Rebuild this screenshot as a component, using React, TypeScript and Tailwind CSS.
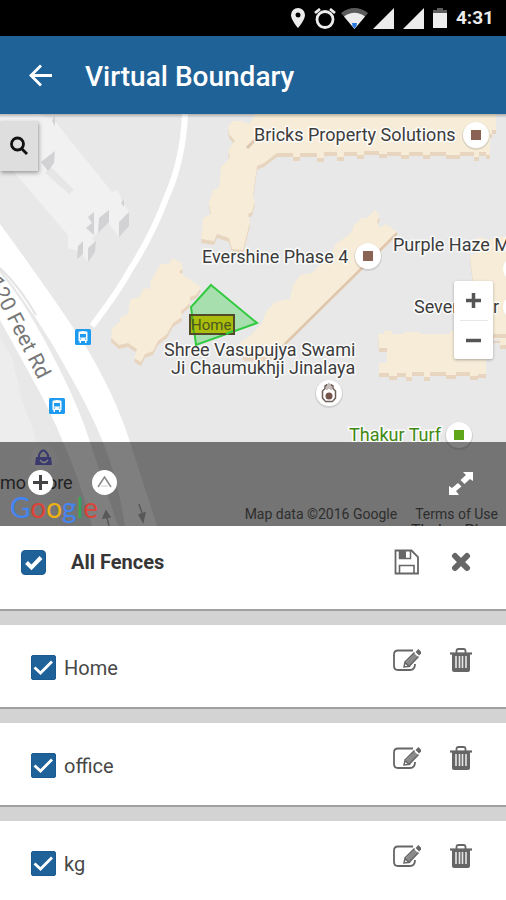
import { useState } from "react";
import type { ReactNode } from "react";

const fences = ["Home", "office", "kg"];

function StatusBar() {
  return (
    <div className="flex h-9 items-center justify-end gap-[9px] bg-black pr-3 text-[#ececec]">
      <svg width="14" height="20" viewBox="0 0 14 20" fill="currentColor" aria-hidden="true">
        <path fillRule="evenodd" d="M7 0a7 7 0 0 0-7 7c0 5 7 13 7 13s7-8 7-13a7 7 0 0 0-7-7Zm0 4.500a2.500 2.500 0 1 1 0 5 2.500 2.500 0 0 1 0-5Z" />
      </svg>
      <svg width="22" height="21" viewBox="0 0 22 21" fill="none" stroke="currentColor" strokeWidth="2.800" aria-hidden="true">
        <circle cx="11" cy="11.500" r="8" />
        <path d="M1 5l5-4M21 5l-5-4" />
      </svg>
      <svg className="-ml-1" width="27" height="21" viewBox="0 0 27 21" aria-hidden="true">
        <path d="M0 5Q13.500-5 27 5L13.500 21Z" fill="#5c5c5c" />
        <path d="M3 8.500Q13.500 1 24 8.500L13.500 21Z" fill="currentColor" />
        <path d="M11 15h5l-.5 3-2 2.500-2-2.500Z" fill="#2878e0" />
      </svg>
      <svg className="-ml-1" width="21" height="21" viewBox="0 0 21 21" fill="currentColor" aria-hidden="true">
        <path d="M21 0v21H0Z" />
      </svg>
      <svg width="21" height="21" viewBox="0 0 21 21" fill="currentColor" aria-hidden="true">
        <path d="M21 0v21H0Z" />
      </svg>
      <svg width="14" height="20" viewBox="0 0 14 20" aria-hidden="true">
        <path d="M0 2h4V0h6v2h4v4H0Z" fill="#5c5c5c" />
        <path d="M0 5h14v15H0Z" fill="currentColor" />
      </svg>
      <span className="text-[19px] leading-5 font-bold">4:31</span>
    </div>
  );
}

function BusStop({ x, y }: { x: number; y: number }) {
  return (
    <g transform={`translate(${x} ${y})`}>
      <rect width="16" height="16" rx="1.500" fill="#1e9bef" />
      <path d="M3.500 3.500q0-1.500 4.500-1.500t4.500 1.500V12h-1v2H10v-2H6v2H4.500v-2h-1Z" fill="#fff" />
      <path d="M5 5h6v3.500H5Z" fill="#1e9bef" />
      <path d="M4.700 10h1.500M9.800 10h1.500" stroke="#1e9bef" />
    </g>
  );
}

function Pin({ x, y, color }: { x: number; y: number; color: string }) {
  return (
    <g>
      <circle cx={x} cy={y + 1} r="14" fill="#000" opacity=".1" />
      <circle cx={x} cy={y} r="13" fill="#fff" />
      <rect x={x - 5} y={y - 5} width="10" height="10" fill={color} />
    </g>
  );
}

const buildings = [
  "M228 126L234 121H242L249 124L256 114H496V130H492V134H490V155H486V152H479V157H474V152H460V155H446V152H430V155H423V152H409V155H401V152H387V154H379V151H364V155H357V152H344V157H337V152H324V158H317V153H300V157H293V153H277L264 163L257 166L253 196L255 201L252 212L248 214L250 222L246 238L243 250L232 249L229 238L217 234L214 241L201 239L203 218L211 214L209 203L213 190L219 188L221 167L230 158L228 150L235 141L229 134Z",
  "M158 268L161 264L169 264L172 258L180 262L183 268L179 272L201 287L196 295L190 297V303L181 311L182 317L173 323L167 334L158 341L153 351L145 354L141 362L134 358L137 349L128 343L119 345L111 338L112 328L121 321L119 318L128 314L130 300L139 297L144 288L150 289L151 280Z",
  "M375 210L380 215L377 222L380 228L386 224L397 232L285 342L270 357H244L238 344L250 336L262 323L266 312L275 302L290 299L293 285L300 275L312 273L330 255L336 244L352 232L354 225L362 218H367Z",
  "M378 334H384V331H392V334H404V332H420V334H450V331H486V337H506V345H500V339H486V374H478V376H470V372H456V375H446V372H430V377H424V372H412V377H406V373H397V376H389V373H379V363H387V348H379Z",
  "M470 256L475 254L474 240L480 237L488 240L506 236V334H470L474 290Z",
];

const labelHalo = "fill-[#3c3c3c] stroke-white/80 stroke-3 [paint-order:stroke] [stroke-linejoin:round]";

function MapArt() {
  return (
    <svg className="block h-full w-full" viewBox="0 114 506 412" preserveAspectRatio="xMidYMid slice" role="img" aria-label="Map">
      <rect y="114" width="506" height="412" fill="#e8e8e8" />
      <path d="M0 336L12 358L22 400L33 430L60 526H0Z" fill="#ededed" />

      <g>
        <path d="M0 114H40L54 120L112 192L118 190L122 200L129 212V226L118 236L108 222L92 238L96 246L88 262L80 252L68 248V235L0 156Z" fill="#f1f1f1" />
        <path d="M50 166L74 190L69 194L45 173Z" fill="#e6e6e6" />
        <g fill="#d2d2d5">
          <path d="M41 162L55 151L54 163L48 171ZM52 121L55 115V126ZM99 218L109 210V222L98 233ZM119 222L129 212V226L119 237ZM78 246L83 241V254L77 259ZM88 248L96 241L95 252L88 262ZM88 217L94 212V235L86 228L92 223ZM121 203L124 199V207Z" />
        </g>
      </g>

      <g fill="#fff">
        <path d="M0 224Q45 285 85 345Q115 395 130 442L157 526H125Q118 480 103 442Q90 410 67 370Q40 320 0 268Z" />
        <path d="M0 273Q28 305 60 370Q80 410 90 442L118 526H92Q80 480 63 442Q50 410 33 380L0 320Z" />
      </g>
      <path d="M185 114Q183 160 167 196Q152 236 130 270Q118 292 92 326" fill="none" stroke="#fff" strokeWidth="6" />
      <path d="M0 268Q20 287 36 315" fill="none" stroke="#e4e4e4" strokeWidth="2" />

      {buildings.map((d) => (
        <g key={d}>
          <path d={d} fill="#e8d5c0" transform="translate(0 4)" />
          <path d={d} fill="#f6ecd8" />
        </g>
      ))}
      <path d="M397 233L285 344" stroke="#dfc5ab" strokeWidth="2" />
      <path d="M247 148L256 139" stroke="#dcc5ae" strokeWidth="3" />

      <BusStop x={75} y={329} />
      <BusStop x={49} y={398} />

      <g className="text-[18px]">
        <text x="254" y="141" className={labelHalo}>Bricks Property Solutions</text>
        <text x="202" y="263" className={labelHalo}>Evershine Phase 4</text>
        <text x="393" y="251" className={labelHalo}>Purple Haze Music</text>
        <text x="414" y="313" className={labelHalo}>Seven Star</text>
        <text x="164" y="356" className={labelHalo}>Shree Vasupujya Swami</text>
        <text x="171" y="374" className={labelHalo}>Ji Chaumukhji Jinalaya</text>
        <text x="349" y="441" className="fill-[#3f8a12] stroke-white/80 stroke-3 [paint-order:stroke]">Thakur Turf</text>
        <text x="0" y="489" className="fill-[#444444]">mo Store</text>
        <text transform="translate(-12 281) rotate(63)" className="fill-[#777777] text-[21px]">120 Feet Rd</text>
      </g>

      <Pin x={476} y={135} color="#8a6354" />
      <Pin x={368} y={256} color="#8a6354" />
      <Pin x={459} y={435} color="#5fa61b" />
      <circle cx="515" cy="269" r="12" fill="#fff" />
      <circle cx="515" cy="307" r="12" fill="#fff" />
      <circle cx="329" cy="394" r="14" fill="#000" opacity=".1" />
      <circle cx="329" cy="393" r="13" fill="#fff" />
      <path d="M325 401L322.500 398V391L325 388.500V386L327.500 384.500M333 401L335.500 398V391L333 388.500V386L330.500 384.500M325 401.500H333" fill="none" stroke="#6e5e58" strokeWidth="1.500" />
      <path d="M327 390v-4M329 389v-6M331 390v-4" stroke="#8b7b75" />
      <circle cx="329" cy="396" r="3.500" fill="#75534a" />

      <path d="M211 285L257 323L196 345L191 307Z" fill="#27cf3b" fillOpacity=".33" stroke="#32ca40" strokeWidth="2" />
      <rect x="190" y="315" width="44" height="19" fill="#aabd0c" stroke="#514b2b" strokeWidth="2" />
      <path d="M192 316L194 333" stroke="#4fae1c" strokeWidth="2" />
      <path d="M233 331L226 334" stroke="#32ca40" strokeWidth="2" />
      <text x="191" y="330" className="fill-[#4b571e] text-[15px]">Home</text>

      <circle cx="44" cy="458" r="13" fill="#fff" opacity=".3" />
      <path d="M36 457h15l1 8H35Z" fill="#7373dc" />
      <path d="M39 458v-3q4-9 9 0v3" fill="none" stroke="#7373dc" strokeWidth="2" />
      <path d="M40 460q4 5 8 0" fill="none" stroke="#fff" strokeWidth="1.500" />
      <path d="M109 526l-3-13M103 518l3-7 4 6ZM139 504l4 12M139 515l4 7 2-9Z" fill="#b0b0b0" stroke="#b0b0b0" strokeWidth="1.500" />
      <text x="411" y="536" className="fill-[#555555] text-[16px]">Thakur Pleasant</text>
    </svg>
  );
}

function MapPanel() {
  return (
    <section className="relative h-[412px] overflow-hidden" aria-label="Fence map">
      <MapArt />
      <div className="absolute inset-x-0 top-0 h-1 bg-linear-to-b from-black/25 to-transparent" />

      <button type="button" aria-label="Search map" className="absolute top-[7px] left-0 flex h-[50px] w-[38px] items-center justify-center bg-[#dedede] shadow-[1px_2px_4px_rgba(0,0,0,0.35)]">
        <svg width="20" height="20" viewBox="0 0 20 20" fill="none" stroke="#111" strokeWidth="2.800" aria-hidden="true">
          <circle cx="8.500" cy="8" r="6" />
          <path d="M12.500 12.500L18 18" />
        </svg>
      </button>

      <div className="absolute top-[167px] right-[13px] flex w-[39px] flex-col items-center rounded-xs bg-white shadow-[0_1px_3px_rgba(0,0,0,0.3)]">
        <button type="button" aria-label="Zoom in" className="flex h-[39px] w-full items-center justify-center">
          <svg width="15" height="15" viewBox="0 0 15 15" stroke="#555" strokeWidth="3.500" aria-hidden="true">
            <path d="M7.500 0v15M0 7.500h15" />
          </svg>
        </button>
        <span className="h-px w-7 bg-[#e6e6e6]" />
        <button type="button" aria-label="Zoom out" className="flex h-[38px] w-full items-center justify-center">
          <svg width="15" height="15" viewBox="0 0 15 15" stroke="#555" strokeWidth="3.500" aria-hidden="true">
            <path d="M0 7.500h15" />
          </svg>
        </button>
      </div>

      <div className="absolute inset-x-0 bottom-0 h-[84px] bg-black/50">
        <div className="flex h-full flex-col justify-between pt-[27px]">
          <div className="flex items-center pr-8 pl-7">
            <button type="button" aria-label="Add fence" className="flex size-[25px] items-center justify-center rounded-full bg-white">
              <svg width="15" height="15" viewBox="0 0 15 15" stroke="#444" strokeWidth="3" aria-hidden="true">
                <path d="M7.500 0v15M0 7.500h15" />
              </svg>
            </button>
            <button type="button" aria-label="Draw polygon" className="ml-[39px] flex size-[25px] items-center justify-center rounded-full bg-white">
              <svg width="15" height="13" viewBox="0 0 15 13" fill="none" stroke="#888" aria-hidden="true">
                <path d="M1 11L7.500 1L14 11" strokeWidth="1.500" />
                <path d="M4 10h7" stroke="#ccc" />
              </svg>
            </button>
            <button type="button" aria-label="Expand map" className="ml-auto">
              <svg width="26" height="26" viewBox="0 0 26 26" fill="#fff" aria-hidden="true">
                <path d="M15 3h10v9l-3-2-5.500 5-4-4 5.500-5ZM1 17l3 2 6-5 3.500 3.500L8 22l3 4H1Z" />
              </svg>
            </button>
          </div>
          <div className="flex h-[31px] items-end pr-2 pl-[10px] text-[14px] leading-6 text-[#2e2e2e]">
            <span className="self-start font-['Lato',sans-serif] text-[28px] leading-6" aria-label="Google">
              <span className="text-[#4285f4]">G</span>
              <span className="text-[#dc4336]">o</span>
              <span className="text-[#eeb211]">o</span>
              <span className="text-[#4285f4]">g</span>
              <span className="text-[#34a853]">l</span>
              <span className="text-[#dc4336]">e</span>
            </span>
            <span className="ml-auto">Map data ©2016 Google</span>
            <a href="#terms" className="ml-[18px]">Terms of Use</a>
          </div>
        </div>
      </div>
    </section>
  );
}

function IconButton({ label, children }: { label: string; children: ReactNode }) {
  return (
    <button type="button" aria-label={label} className="flex size-8 items-center justify-center text-[#666666]">
      {children}
    </button>
  );
}

function CheckBox({ id, checked, onChange, bold = false }: { id: string; checked: boolean; onChange: () => void; bold?: boolean }) {
  return (
    <span className="grid">
      <input
        id={id}
        type="checkbox"
        checked={checked}
        onChange={onChange}
        className={
          bold
            ? "col-start-1 row-start-1 size-[25px] appearance-none rounded-sm border border-[#1b5a90] bg-white checked:bg-[#1f6199]"
            : "col-start-1 row-start-1 size-[25px] appearance-none rounded-xs border border-[#1b5a90] bg-white checked:bg-[#1f6199]"
        }
      />
      <svg className="pointer-events-none col-start-1 row-start-1" width="25" height="25" viewBox="0 0 25 25" fill="none" stroke="#fff" aria-hidden="true">
        {bold ? <path d="M5.500 12.500L10.500 17.500L20 7.500" strokeWidth="4" /> : <path d="M3.500 12.500L9.500 18L21 6.500" strokeWidth="2.800" />}
      </svg>
    </span>
  );
}

function FenceRow({ name, checked, onChange }: { name: string; checked: boolean; onChange: () => void }) {
  return (
    <li className="flex h-[84px] items-center border-b-2 border-[#a0a0a0] bg-white pt-[2px] pr-[29px] pl-[31px]">
      <CheckBox id={`fence-${name}`} checked={checked} onChange={onChange} />
      <label htmlFor={`fence-${name}`} className="pt-[2px] pl-2 text-[20px] leading-6 text-[#484848]">
        {name}
      </label>
      <div className="ml-auto flex gap-[22px] pb-[15px]">
        <IconButton label={`Edit ${name}`}>
          <svg width="28" height="24" viewBox="0 0 28 24" fill="none" stroke="currentColor" aria-hidden="true">
            <path d="M20 2.500H5Q1 2.500 1 6.500V18Q1 22 5 22H17Q22 22 22 16" strokeWidth="1.800" />
            <path d="M14 17L23 7" stroke="#8a8a8a" strokeWidth="5" />
            <path d="M12 14L21.500 4.500M16 18.500L25.500 8.500" strokeWidth="1.500" />
            <path d="M12 14.500L11 19L16 18.500Z" fill="#fff" strokeWidth="1.500" />
            <path d="M24 2.500L27.500 6" strokeWidth="4" />
          </svg>
        </IconButton>
        <IconButton label={`Delete ${name}`}>
          <svg width="22" height="24" viewBox="0 0 22 24" fill="none" stroke="currentColor" aria-hidden="true">
            <path d="M0 5.500H22" strokeWidth="2.200" />
            <path d="M6.500 5V3Q6.500 1 8.500 1H13.500Q15.500 1 15.500 3V5" strokeWidth="1.800" />
            <path d="M2 6H20V22Q20 24 18 24H4Q2 24 2 22Z" fill="currentColor" stroke="none" />
            <path d="M6 8V20M9.500 8V20M12.500 8V20M16 8V20" stroke="#e6e6e6" strokeWidth="1.600" />
          </svg>
        </IconButton>
      </div>
    </li>
  );
}

export default function App() {
  const [selected, setSelected] = useState<string[]>(fences);
  const allSelected = selected.length === fences.length;
  const toggle = (name: string) =>
    setSelected((now) => (now.includes(name) ? now.filter((item) => item !== name) : [...now, name]));

  return (
    <main className="h-screen overflow-hidden bg-[#d3d3d3] font-['Roboto',sans-serif]">
      <StatusBar />
      <header className="flex h-[78px] items-center bg-[#1f6297] pl-[27px] text-white">
        <button type="button" aria-label="Back">
          <svg width="26" height="24" viewBox="0 0 26 24" fill="none" stroke="currentColor" strokeWidth="2.800" aria-hidden="true">
            <path d="M25 12.500H4M14 2.500L4 12.500L14 22.500" />
          </svg>
        </button>
        <h1 className="pt-1 pl-8 text-[28px] leading-8 font-medium">Virtual Boundary</h1>
      </header>
      <MapPanel />
      <div className="flex h-[85px] items-center border-b-2 border-[#a0a0a0] bg-white pr-[29px] pb-[11px] pl-[21px]">
        <CheckBox id="all-fences" bold checked={allSelected} onChange={() => setSelected(allSelected ? [] : fences)} />
        <label htmlFor="all-fences" className="pl-[25px] text-[20px] leading-6 font-bold text-[#363636]">
          All Fences
        </label>
        <div className="ml-auto flex gap-[22px]">
          <IconButton label="Save fences">
            <svg width="26" height="26" viewBox="0 0 26 26" fill="none" stroke="currentColor" aria-hidden="true">
              <path d="M1.500 1.500H17.500L24 8V24.500H1.500Z" strokeWidth="1.800" />
              <path d="M5.500 24V16.500H20V24" strokeWidth="1.600" />
              <path d="M5.500 2V9.500H16.500V2" strokeWidth="1.500" />
              <path d="M6 2H12V9H6Z" fill="currentColor" stroke="none" />
            </svg>
          </IconButton>
          <IconButton label="Close list">
            <svg width="20" height="20" viewBox="0 0 20 20" fill="none" stroke="currentColor" strokeWidth="6" strokeLinecap="round" aria-hidden="true">
              <path d="M4 4L16 16M16 4L4 16" />
            </svg>
          </IconButton>
        </div>
      </div>
      <ul className="flex flex-col gap-[14px] pt-[14px]">
        {fences.map((name) => (
          <FenceRow key={name} name={name} checked={selected.includes(name)} onChange={() => toggle(name)} />
        ))}
      </ul>
    </main>
  );
}
